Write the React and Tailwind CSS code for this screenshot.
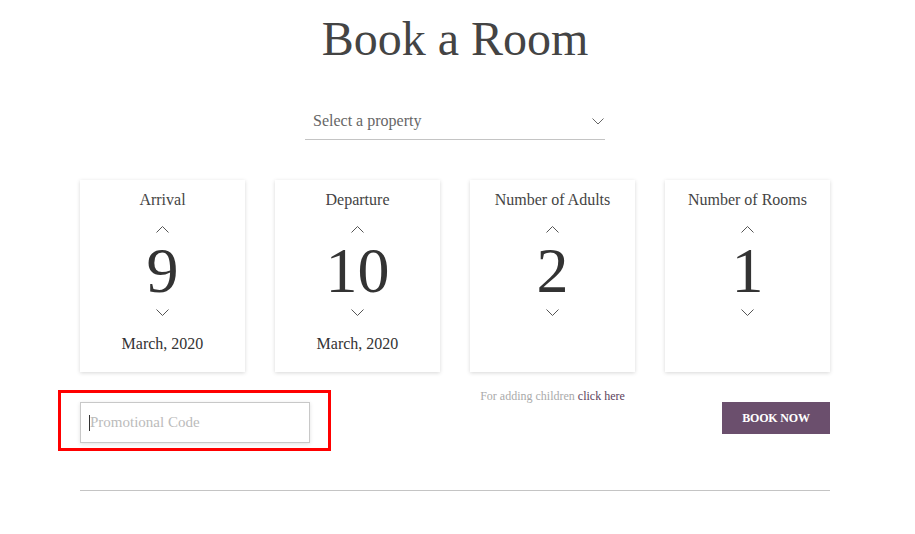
import React from 'react';

const serif = { fontFamily: '"Liberation Serif", "Times New Roman", serif' };

function Chevron({ up = false, className = '' }) {
  return (
    <svg width="13" height="7" viewBox="0 0 13 7" className={className}>
      <polyline
        points={up ? '0.5,6.5 6.5,0.5 12.5,6.5' : '0.5,0.5 6.5,6.5 12.5,0.5'}
        fill="none"
        stroke="#555"
        strokeWidth="1"
      />
    </svg>
  );
}

function Counter({ label, value, sub }) {
  return (
    <div className="bg-white h-[192px] shadow-[0_1px_4px_rgba(0,0,0,0.16)] flex flex-col items-center pt-[10px]">
      <div className="text-[16px] leading-[20px] text-[#444]">{label}</div>
      <Chevron up className="mt-[16px]" />
      <div className="mt-[6px] h-[64px] text-[64px] leading-[64px] text-[#333]">{value}</div>
      <Chevron className="mt-[6px]" />
      {sub && <div className="mt-[18px] text-[16px] leading-[20px] text-[#333]">{sub}</div>}
    </div>
  );
}

export default function App() {
  return (
    <div className="min-h-screen bg-white pt-[15px]" style={serif}>
      <div className="w-[750px] ml-[80px]">
        {/* Title */}
        <h1 className="text-center text-[48px] leading-[48px] text-[#444] font-normal">Book a Room</h1>

        {/* Property select */}
        <div className="mt-[40px] mx-auto w-[300px] h-[37px] border-b border-[#c4c4c4] flex items-center justify-between pl-[8px] pr-[1px]">
          <span className="text-[16px] text-[#666]">Select a property</span>
          <svg width="12" height="7" viewBox="0 0 12 7">
            <polyline points="0.5,0.5 6,6 11.5,0.5" fill="none" stroke="#666" strokeWidth="1" />
          </svg>
        </div>

        {/* Counters */}
        <div className="mt-[40px] grid grid-cols-4 gap-[30px]">
          <Counter label="Arrival" value="9" sub="March, 2020" />
          <Counter label="Departure" value="10" sub="March, 2020" />
          <Counter label="Number of Adults" value="2" />
          <Counter label="Number of Rooms" value="1" />
        </div>

        {/* Promo / children / book */}
        <div className="mt-[16px] grid grid-cols-4 gap-[30px] items-start">
          <div className="col-span-2">
            <div className="relative mt-[14px] w-[230px]">
              <input
                type="text"
                placeholder="Promotional Code"
                className="w-[230px] h-[41px] border border-[#c8c8c8] bg-white px-[9px] text-[15px] text-[#444] placeholder:text-[#bbb] outline-none shadow-[0_1px_4px_rgba(0,0,0,0.12)]"
                style={serif}
              />
              <span className="absolute left-[9px] top-[13px] w-[1px] h-[16px] bg-[#333]" />
              <div className="absolute left-[-22px] top-[-12px] w-[273px] h-[61px] border-[3px] border-[#ff0000] pointer-events-none" />
            </div>
          </div>
          <div className="text-center text-[12px] leading-[16px] text-[#aaa] whitespace-nowrap">
            For adding children <a className="text-[#5c3f5c] cursor-pointer">click here</a>
          </div>
          <div className="flex justify-end">
            <button className="mt-[14px] w-[108px] h-[32px] bg-[#6b4f6d] text-white text-[12px] font-bold tracking-[-0.2px]" style={serif}>
              BOOK NOW
            </button>
          </div>
        </div>

        {/* Divider */}
        <div className="mt-[47px] border-t border-[#c4c4c4]" />
      </div>
    </div>
  );
}
